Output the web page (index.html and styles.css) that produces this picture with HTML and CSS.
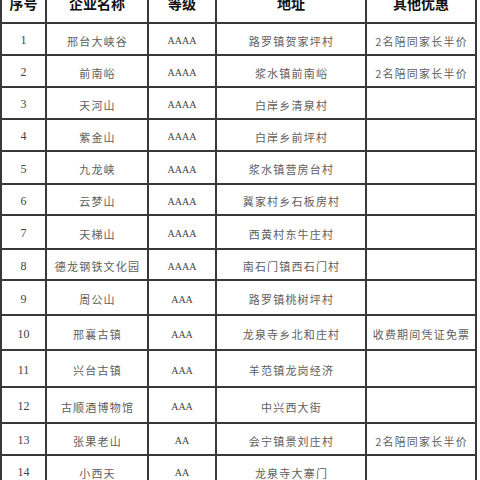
FILE: index.html
```html
<!DOCTYPE html>
<html lang="zh-CN">
<head>
<meta charset="utf-8">
<title>景区优惠表</title>
<link rel="stylesheet" href="styles.css">
</head>
<body>
<table class="sheet">
  <colgroup>
    <col class="c-no"><col class="c-name"><col class="c-level"><col class="c-addr"><col class="c-extra">
  </colgroup>
  <thead>
    <tr class="head"><th>序号</th><th>企业名称</th><th>等级</th><th>地址</th><th>其他优惠</th></tr>
  </thead>
  <tbody>
    <tr><td class="num">1</td><td class="cn">邢台大峡谷</td><td class="num">AAAA</td><td class="cn">路罗镇贺家坪村</td><td class="cn">2名陪同家长半价</td></tr>
    <tr><td class="num">2</td><td class="cn">前南峪</td><td class="num">AAAA</td><td class="cn">浆水镇前南峪</td><td class="cn">2名陪同家长半价</td></tr>
    <tr><td class="num">3</td><td class="cn">天河山</td><td class="num">AAAA</td><td class="cn">白岸乡清泉村</td><td class="cn"></td></tr>
    <tr><td class="num">4</td><td class="cn">紫金山</td><td class="num">AAAA</td><td class="cn">白岸乡前坪村</td><td class="cn"></td></tr>
    <tr><td class="num">5</td><td class="cn">九龙峡</td><td class="num">AAAA</td><td class="cn">浆水镇营房台村</td><td class="cn"></td></tr>
    <tr><td class="num">6</td><td class="cn">云梦山</td><td class="num">AAAA</td><td class="cn">冀家村乡石板房村</td><td class="cn"></td></tr>
    <tr><td class="num">7</td><td class="cn">天梯山</td><td class="num">AAAA</td><td class="cn">西黄村东牛庄村</td><td class="cn"></td></tr>
    <tr><td class="num">8</td><td class="cn">德龙钢铁文化园</td><td class="num">AAAA</td><td class="cn">南石门镇西石门村</td><td class="cn"></td></tr>
    <tr><td class="num">9</td><td class="cn">周公山</td><td class="num">AAA</td><td class="cn">路罗镇桃树坪村</td><td class="cn"></td></tr>
    <tr><td class="num">10</td><td class="cn">邢襄古镇</td><td class="num">AAA</td><td class="cn">龙泉寺乡北和庄村</td><td class="cn">收费期间凭证免票</td></tr>
    <tr><td class="num">11</td><td class="cn">兴台古镇</td><td class="num">AAA</td><td class="cn">羊范镇龙岗经济</td><td class="cn"></td></tr>
    <tr><td class="num">12</td><td class="cn">古顺酒博物馆</td><td class="num">AAA</td><td class="cn">中兴西大街</td><td class="cn"></td></tr>
    <tr><td class="num">13</td><td class="cn">张果老山</td><td class="num">AA</td><td class="cn">会宁镇景刘庄村</td><td class="cn">2名陪同家长半价</td></tr>
    <tr><td class="num">14</td><td class="cn">小西天</td><td class="num">AA</td><td class="cn">龙泉寺大寨门</td><td class="cn"></td></tr>
  </tbody>
</table>
</body>
</html>
```
FILE: styles.css
```css
html, body {
  margin: 0;
  padding: 0;
  background: #ffffff;
  overflow: hidden;
}
.sheet {
  border-collapse: collapse;
  table-layout: fixed;
  width: 475px;
  margin-top: -18px;
  font-family: "Noto Sans CJK SC", "Liberation Serif", serif;
}
.c-no { width: 45px; }
.c-name { width: 102px; }
.c-level { width: 68px; }
.c-addr { width: 150px; }
.c-extra { width: 110px; }
.sheet th, .sheet td {
  border: 2px solid #383838;
  text-align: center;
  vertical-align: middle;
  padding: 0;
  white-space: nowrap;
  overflow: hidden;
}
.sheet th {
  font-size: 14px;
  font-weight: 700;
  color: #111;
  height: 38px;
}
.sheet td.cn {
  font-size: 11px;
  letter-spacing: 1.2px;
  padding-left: 1px;
  color: #5e5e5e;
  padding-top: 3px;
}
.sheet td.num {
  font-family: "Liberation Serif", serif;
  font-size: 12px;
  color: #444;
  padding-top: 3px;
}
.sheet tbody td.num:nth-child(3) {
  font-size: 10px;
}
.sheet tbody tr { height: 32px; }
.sheet tbody tr:nth-child(5) { height: 33px; }
.sheet tbody tr:nth-child(6) { height: 31px; }
.sheet tbody tr:nth-child(7) { height: 34px; }
.sheet tbody tr:nth-child(8) { height: 31px; }
.sheet tbody tr:nth-child(9) { height: 35px; }
.sheet tbody tr:nth-child(10) { height: 35px; }
.sheet tbody tr:nth-child(11) { height: 37px; }
.sheet tbody tr:nth-child(12) { height: 36px; }
```
